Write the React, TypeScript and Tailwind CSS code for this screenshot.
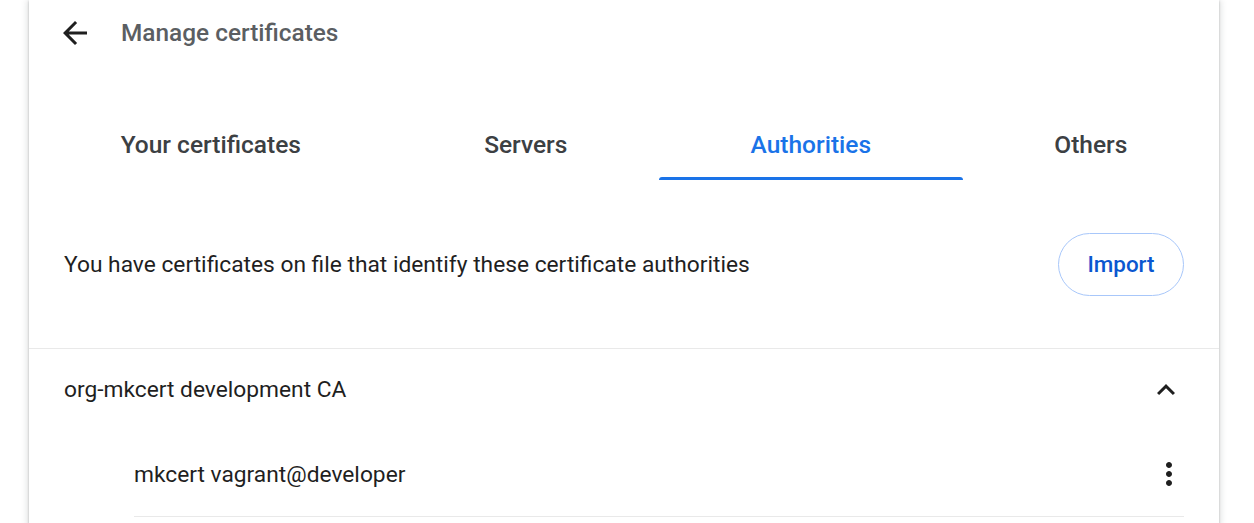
import { useState } from 'react'

const tabs = ['Your certificates', 'Servers', 'Authorities', 'Others']

function BackIcon() {
  return (
    <svg viewBox="0 0 24 24" className="h-9 w-9 fill-[#1f1f1f]">
      <path d="M20 11H7.83l5.59-5.59L12 4l-8 8 8 8 1.41-1.41L7.83 13H20v-2z" />
    </svg>
  )
}

function ExpandLessIcon() {
  return (
    <svg viewBox="0 0 24 24" className="h-9 w-9 fill-[#1f1f1f]">
      <path d="M12 8l-6 6 1.41 1.41L12 10.83l4.59 4.58L18 14z" />
    </svg>
  )
}

function MoreVertIcon() {
  return (
    <svg viewBox="0 0 24 24" className="h-9 w-9 fill-[#1f1f1f]">
      <path d="M12 8c1.1 0 2-.9 2-2s-.9-2-2-2-2 .9-2 2 .9 2 2 2zm0 2c-1.1 0-2 .9-2 2s.9 2 2 2 2-.9 2-2-.9-2-2-2zm0 6c-1.1 0-2 .9-2 2s.9 2 2 2 2-.9 2-2-.9-2-2-2z" />
    </svg>
  )
}

export default function App() {
  const [active, setActive] = useState('Authorities')

  return (
    <div className="min-h-screen bg-white font-['Roboto',sans-serif] text-[#1f1f1f]">
      <div className="ml-[29px] min-h-screen w-[1190px] bg-white shadow-[0_1px_2px_rgba(60,64,67,0.3),0_2px_6px_2px_rgba(60,64,67,0.15)]">
        <div className="flex h-[66px] items-center pl-[28px]">
          <button className="flex h-9 w-9 items-center justify-center">
            <BackIcon />
          </button>
          <h1 className="ml-[28px] text-[24.4px] font-medium text-[#5b5e62]">Manage certificates</h1>
        </div>

        <div className="mt-[44px] flex">
          {tabs.map((t) => (
            <button
              key={t}
              onClick={() => setActive(t)}
              className={`relative flex h-[70px] flex-auto items-center justify-center text-[24.5px] font-medium ${
                active === t ? 'text-[#1a73e8]' : 'text-[#3c4043]'
              }`}
            >
              {t}
              {active === t && (
                <span className="absolute bottom-0 left-0 right-0 h-[3px] rounded-t-[3px] bg-[#1a73e8]" />
              )}
            </button>
          ))}
        </div>

        <div className="flex items-center justify-between border-b border-[#e9e9e9] px-[35px] pt-[53px] pb-[52px]">
          <p className="pt-[1px] text-[22.75px]">You have certificates on file that identify these certificate authorities</p>
          <button className="h-[63px] w-[126px] rounded-full border border-[#a8c7fa] text-[22.4px] font-medium text-[#0b57d0]">
            Import
          </button>
        </div>

        <div className="flex h-[82px] items-center justify-between pl-[35px] pr-[35px]">
          <span className="pt-[1px] text-[22.75px]">org-mkcert development CA</span>
          <ExpandLessIcon />
        </div>

        <div className="ml-[105px] mr-[35px] flex h-[86px] items-center justify-between border-b border-[#e9e9e9]">
          <span className="pt-[3px] text-[22.75px]">mkcert vagrant@developer</span>
          <span className="-mr-[3px] pt-[1px]">
            <MoreVertIcon />
          </span>
        </div>
      </div>
    </div>
  )
}
